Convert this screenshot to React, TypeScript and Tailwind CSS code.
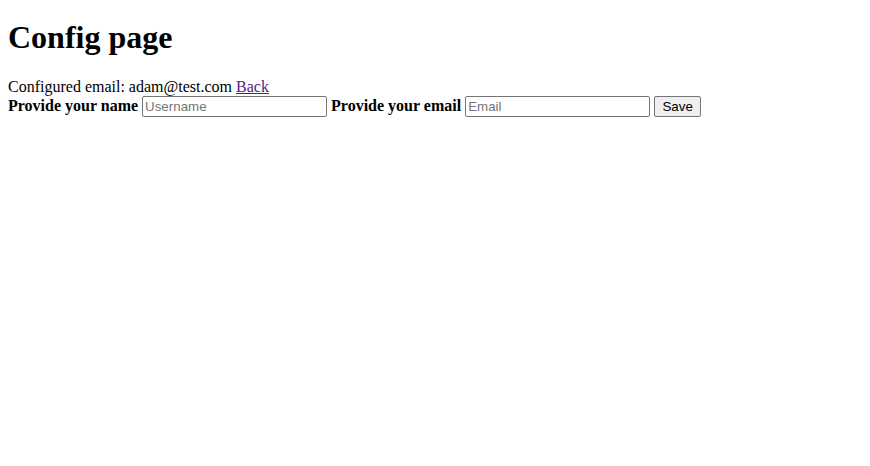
export default function App() {
  const inputCls =
    "w-[185px] h-[21px] border border-[#767676] rounded-[2px] px-[2px] py-[1px] text-[13.333px] leading-[normal] font-['Liberation_Sans',Arial,sans-serif] text-black placeholder:text-[#757575] align-baseline bg-white";
  return (
    <div className="min-h-[466px] bg-white px-2 pt-px font-['Liberation_Serif','Times_New_Roman',serif] text-base leading-[normal] text-black">
      <h1 className="mt-[18.44px] mb-[21.44px] text-[32px] font-bold leading-[normal]">Config page</h1>
      <div>
        Configured email: adam@test.com{" "}
        <a href="#" className="text-[#551a8b] underline">
          Back
        </a>
      </div>
      <form className="block" onSubmit={(e) => e.preventDefault()}>
        <b>Provide your name</b> <input type="text" placeholder="Username" className={inputCls} />{" "}
        <b>Provide your email</b> <input type="text" placeholder="Email" className={inputCls} />{" "}
        <button
          type="submit"
          className="h-[21px] w-[47px] border border-[#767676] rounded-[2px] bg-[#efefef] px-[6px] py-[1px] text-[13.333px] font-['Liberation_Sans',Arial,sans-serif] text-black align-baseline leading-[normal]"
        >
          Save
        </button>
      </form>
    </div>
  );
}
